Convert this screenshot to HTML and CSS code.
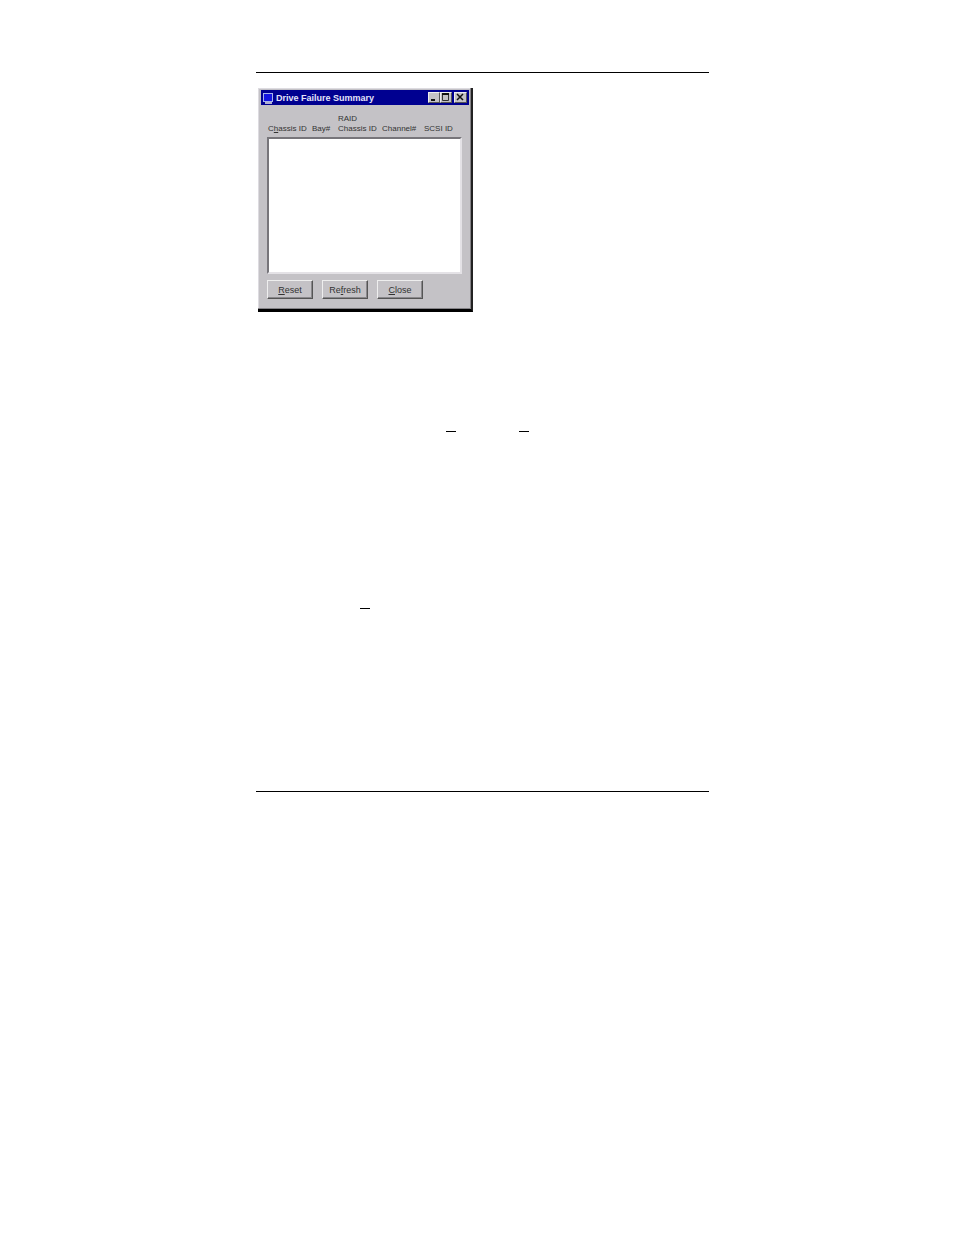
FILE: index.html
```
<!DOCTYPE html>
<html lang="en">
<head>
	<meta charset="utf-8">
	<meta name="viewport" content="width=device-width, initial-scale=1">
	<title>Drive Failure Summary</title>
	<link rel="stylesheet" href="styles.css">
</head>
<body>
	<main class="page">
		<section class="window">
			<header class="title-bar">
				<svg class="title-icon" width="12" height="12" viewBox="0 0 12 12">
					<rect x="1" y="1" width="10" height="9" fill="#a8b4ec"/>
					<rect x="2" y="2" width="8" height="7" fill="#1414e0"/>
					<rect x="3" y="10" width="7" height="2" fill="#b0b0d0"/>
				</svg>
				<h1>Drive Failure Summary</h1>
				<div class="window-controls">
					<button class="control" type="button" aria-label="Minimize">
						<svg width="10" height="9" viewBox="0 0 10 9"><path d="M2 7h4" stroke="#111" stroke-width="2"/></svg>
					</button>
					<button class="control" type="button" aria-label="Maximize">
						<svg width="10" height="9" viewBox="0 0 10 9"><path d="M1.500 1v6.500h6V1" fill="none" stroke="#333"/><path d="M1 1h7" stroke="#111" stroke-width="2"/></svg>
					</button>
					<button class="control control-close" type="button" aria-label="Close window">
						<svg width="11" height="9" viewBox="0 0 11 9"><path d="M2 1l6 6M8 1l-6 6" stroke="#111" stroke-width="1.500"/></svg>
					</button>
				</div>
			</header>
			<div class="window-body">
				<table class="drives">
					<thead>
						<tr>
							<th class="col-chassis">C<u>h</u>assis ID</th>
							<th class="col-bay">Bay#</th>
							<th class="col-raid">RAID<br>Chassis ID</th>
							<th class="col-channel">Channel#</th>
							<th>SCSI ID</th>
						</tr>
					</thead>
					<tbody>
						<tr>
							<td class="drive-list" colspan="5"></td>
						</tr>
					</tbody>
				</table>
				<div class="button-group">
					<button class="button" type="button"><u>R</u>eset</button>
					<button class="button" type="button">Re<u>f</u>resh</button>
					<button class="button" type="button"><u>C</u>lose</button>
				</div>
			</div>
		</section>
		<div class="marks marks-pair">
			<span class="mark"></span>
			<span class="mark"></span>
		</div>
		<div class="marks marks-single">
			<span class="mark"></span>
		</div>
	</main>
</body>
</html>
```
FILE: styles.css
```
body {
	margin: 0;
	background-color: #fff;
	font-family: "Liberation Sans", Arial, sans-serif;
}

.page {
	margin: 72px 245px 0 256px;
	padding: 15px 0 182px 2px;
	border-top: 1px solid #000;
	border-bottom: 1px solid #000;
}

/* dialog window */
.window {
	box-sizing: border-box;
	width: 215px;
	padding: 2px 2px 0 3px;
	border-right: 2px solid #222;
	border-bottom: 3px solid #000;
	background-color: #c4c2c6;
	box-shadow: inset -1px -1px 0 #858387, inset 1px 1px 0 #dddbe0;
	color: #333;
	font-size: 9px;
	line-height: 10px;
}

.title-bar {
	display: flex;
	align-items: center;
	height: 15px;
	padding: 0 2px 0 1px;
	background-color: #000090;
}

.title-icon {
	margin-right: 2px;
}

.title-bar h1 {
	flex: 1;
	margin: 0;
	color: #e4e4fa;
	font-size: 9px;
	white-space: nowrap;
}

.window-controls {
	display: flex;
}

.control {
	box-sizing: border-box;
	width: 12px;
	height: 11px;
	padding: 0;
	border: 1px solid;
	border-color: #eee #555 #555 #eee;
	background-color: #c4c2c6;
}

.control-close {
	width: 13px;
	margin-left: 2px;
}

.control svg {
	display: block;
}

.window-body {
	padding: 9px 7px 10px 6px;
}

.drives {
	width: 100%;
	border-collapse: separate;
	border-spacing: 0;
	table-layout: fixed;
}

.drives th {
	padding: 0 0 3px 1px;
	font-size: 8px;
	font-weight: normal;
	text-align: left;
	vertical-align: bottom;
	white-space: nowrap;
}

.col-chassis {
	width: 43px;
}

.col-bay {
	width: 25px;
}

.col-raid {
	width: 43px;
}

.col-channel {
	width: 41px;
}

.drive-list {
	box-sizing: border-box;
	height: 137px;
	padding: 0;
	border: 2px solid;
	border-color: #77757a #e4e2e6 #e4e2e6 #77757a;
	background-color: #fff;
}

.button-group {
	display: flex;
	gap: 9px;
	margin-top: 6px;
}

.button {
	box-sizing: border-box;
	width: 46px;
	height: 19px;
	padding: 0;
	border: 1px solid;
	border-color: #eee #555 #555 #eee;
	background-color: #c4c2c6;
	box-shadow: inset -1px -1px 0 #8a888c;
	color: #333;
	font-family: inherit;
	font-size: 9px;
	line-height: 10px;
}

/* short rules left on the page */
.marks {
	display: flex;
	gap: 63px;
}

.marks-pair {
	margin-top: 119px;
	padding-left: 188px;
}

.marks-single {
	margin-top: 176px;
	padding-left: 102px;
}

.mark {
	width: 10px;
	height: 1px;
	background-color: #000;
}
```
